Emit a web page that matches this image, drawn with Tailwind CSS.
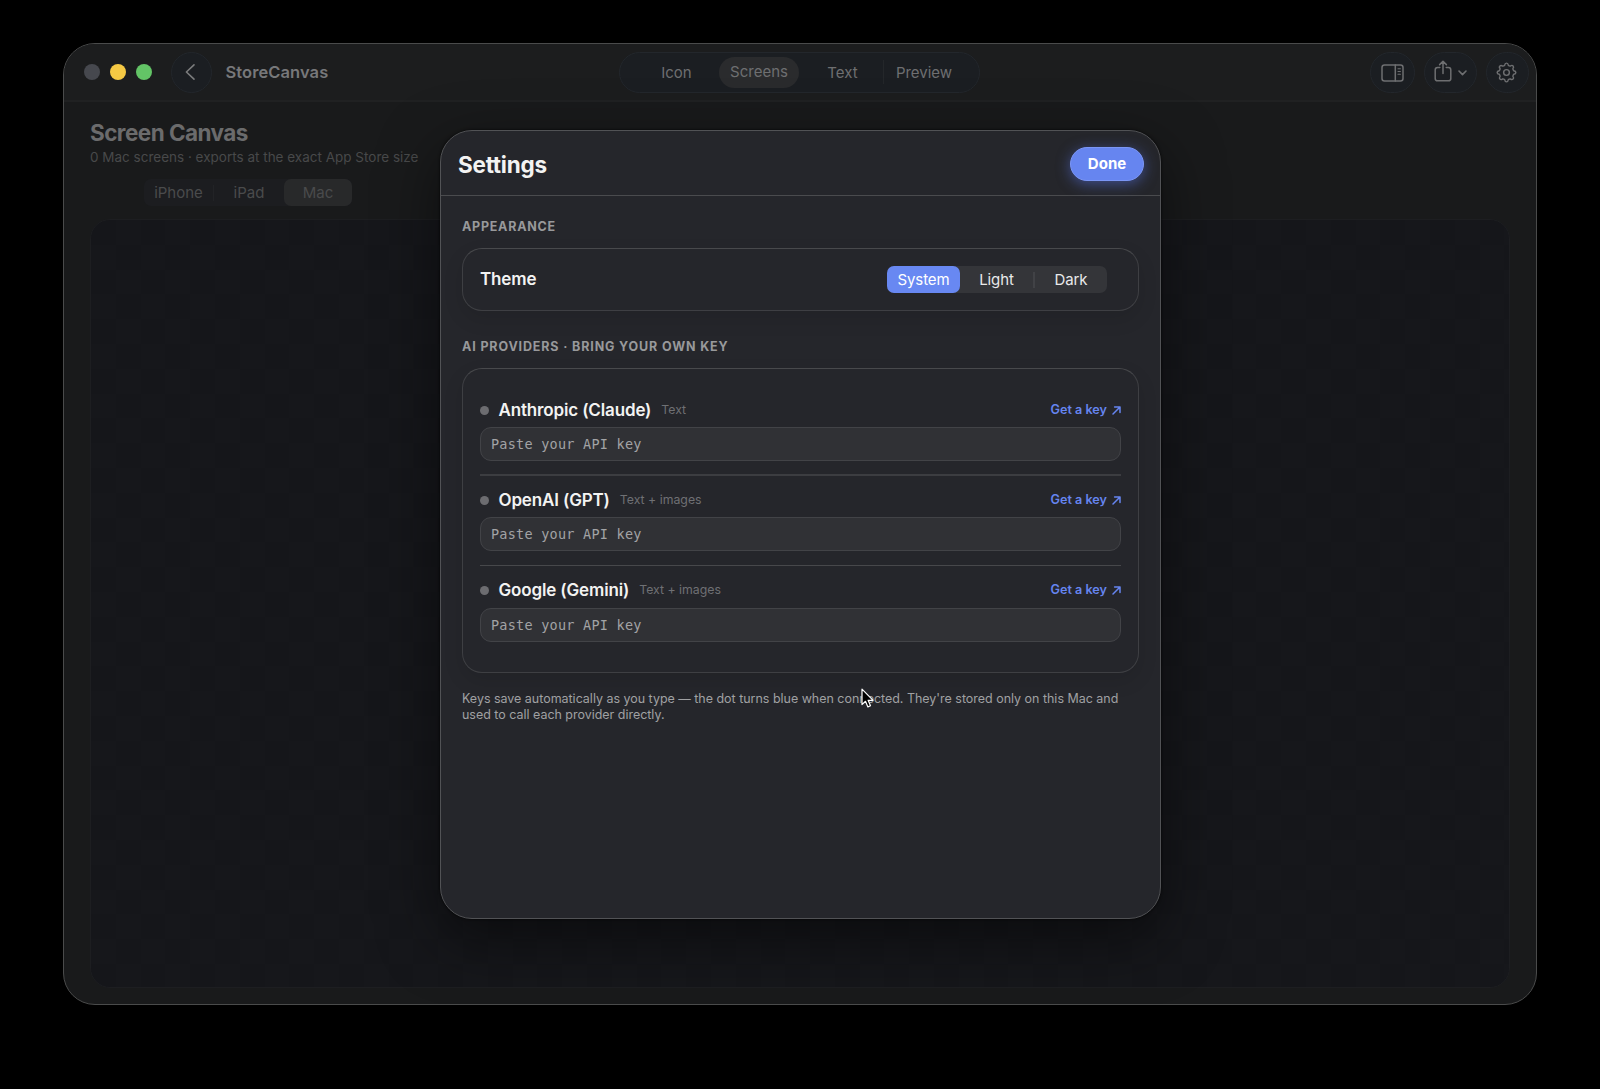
<!DOCTYPE html>
<html lang="en">
<head>
<meta charset="utf-8">
<title>StoreCanvas</title>
<script src="https://cdn.jsdelivr.net/npm/@tailwindcss/browser@4"></script>
</head>
<body class="h-screen overflow-hidden bg-black px-[63px] pt-[43px] font-['Inter',sans-serif] antialiased">
<div class="relative flex h-[962px] w-[1474px] flex-col overflow-hidden rounded-[32px] border border-[#4a4b4b] bg-[#191a1b]">
  <!-- Toolbar -->
  <header class="flex h-[58px] shrink-0 items-center border-b-2 border-[#202122] bg-[#1c1d1e] pl-5 pr-[7px]">
    <div class="flex gap-2.5">
      <span class="size-4 rounded-full bg-[#46484e]"></span>
      <span class="size-4 rounded-full bg-[#f5c944]"></span>
      <span class="size-4 rounded-full bg-[#63c466]"></span>
    </div>
    <div class="ml-[19px] flex size-[41px] items-center justify-center rounded-full border border-[#23272c] bg-[#1b1e22]">
      <svg class="-ml-1 size-[18px]" viewBox="0 0 18 18" fill="none" stroke="#7b7c7d" stroke-width="1.6" stroke-linecap="round" stroke-linejoin="round"><path d="M13 1.8 5.4 9l7.6 7.2"/></svg>
    </div>
    <h1 class="ml-[13.5px] w-[393.5px] text-[16.5px] font-semibold tracking-[0.08px] text-[#77787a]">StoreCanvas</h1>
    <nav class="flex h-[41px] w-[361px] items-center rounded-full border border-[#23272c] bg-[#1b1e22] text-[15px] text-[#6e6f71]">
      <span class="ml-[14px] w-[85px] pt-[2px] text-center">Icon</span>
      <span class="flex h-[31px] w-20 items-center justify-center rounded-full bg-[#2a2b2d] pt-px">Screens</span>
      <span class="w-[85px] border-r border-[#24272a] pl-[3px] pt-[2px] text-center">Text</span>
      <span class="w-20 pt-[2px] text-center">Preview</span>
    </nav>
    <div class="ml-auto flex gap-[9px]">
      <span class="flex h-[41px] w-[45px] items-center justify-center rounded-full border border-[#23272c] bg-[#1b1e22]">
        <svg class="mt-px h-[18px] w-[23px]" viewBox="0 0 23 18" fill="none" stroke="#6e6f71" stroke-width="1.5" stroke-linecap="round"><rect x="1" y="1" width="21" height="16" rx="2.5"/><path d="M14.3 1v16"/><path d="M17 4.8h2.4M17 7.5h2.4M17 10.2h2.4" stroke-width="1.1"/></svg>
      </span>
      <span class="flex h-[41px] w-[53px] items-center justify-center gap-[6px] rounded-full border border-[#23272c] bg-[#1b1e22]">
        <svg class="-mt-[2px] h-[22px] w-[18px]" viewBox="0 0 18 22" fill="none" stroke="#6e6f71" stroke-width="1.5" stroke-linecap="round" stroke-linejoin="round"><path d="M5.8 7.6H3.6A2.4 2.4 0 0 0 1.2 10v8.4a2.4 2.4 0 0 0 2.4 2.4h10.8a2.4 2.4 0 0 0 2.4-2.4V10a2.4 2.4 0 0 0-2.4-2.4h-2.2M9 13.6V1.4M5.6 4.6 9 1.2l3.4 3.4"/></svg>
        <svg class="mt-px h-[6px] w-[9px]" viewBox="0 0 9 6" fill="none" stroke="#6e6f71" stroke-width="1.6" stroke-linecap="round" stroke-linejoin="round"><path d="M1 1l3.5 3.6L8 1"/></svg>
      </span>
      <span class="flex h-[41px] w-[43px] items-center justify-center rounded-full border border-[#23272c] bg-[#1b1e22]">
        <svg class="-ml-[2px] size-[21px]" viewBox="0 0 22 22" fill="none" stroke="#6e6f71" stroke-width="1.5" stroke-linejoin="round"><circle cx="11" cy="11" r="3"/><path d="M9.1 3.4Q9.4 1.2 11 1.2T12.9 3.4Q13.6 4.2 15 4.3Q16.8 2.9 17.9 4.1T17.7 7Q17.7 8.2 18.6 9.1Q20.8 9.4 20.8 11T18.6 12.9Q17.7 13.8 17.7 15Q19.1 16.8 17.9 17.9T15 17.7Q13.6 17.8 12.9 18.6Q12.6 20.8 11 20.8T9.1 18.6Q8.4 17.8 7 17.7Q5.2 19.1 4.1 17.9T4.3 15Q4.3 13.8 3.4 12.9Q1.2 12.6 1.2 11T3.4 9.1Q4.3 8.2 4.3 7Q2.9 5.2 4.1 4.1T7 4.3Q8.4 4.2 9.1 3.4Z"/></svg>
      </span>
    </div>
  </header>

  <!-- Canvas page -->
  <main class="flex flex-1 flex-col px-[26px] pb-4 pt-[15px]">
    <h2 class="text-[22.5px] font-bold leading-8 tracking-[-0.55px] text-[#6b6b6c]">Screen Canvas</h2>
    <p class="-mt-px text-[13.5px] leading-[18px] text-[#48494a]">0 Mac screens · exports at the exact App Store size</p>
    <div class="ml-[54px] mt-[13px] flex h-[27px] w-[208px] items-center rounded-[7px] bg-[#1c1d20] text-[15px] text-[#4a4b4c]">
      <span class="w-[70px] border-r border-[#222326] text-center leading-4">iPhone</span>
      <span class="w-[70px] pt-px text-center">iPad</span>
      <span class="flex h-full w-[68px] items-center justify-center rounded-[7px] bg-[#28292a] pt-px">Mac</span>
    </div>
    <div class="mt-[13px] flex-1 rounded-[20px] border border-[#1d1e21] bg-[#15161a] bg-[repeating-conic-gradient(#16171b_0_25%,#15161a_0_50%)] bg-size-[49.6px_49.6px]"></div>
  </main>

  <!-- Settings sheet -->
  <section class="absolute left-[376px] top-[86px] flex h-[789px] w-[721px] flex-col rounded-[32px] border border-[#515255] bg-[#25262b] shadow-[0_20px_60px_rgba(0,0,0,0.5),0_0_3px_rgba(0,0,0,0.8)]">
    <header class="flex h-[65px] shrink-0 items-center justify-between border-b border-[#4a4b4e] pl-[17px] pr-4">
      <h2 class="mt-[3px] text-[22.5px] font-bold tracking-[-0.25px] text-[#f3f3f2]">Settings</h2>
      <button class="mt-[2px] h-[34px] w-[74px] rounded-full border border-[#7b96f5] bg-[#6685f0] pt-px text-[15px] font-bold text-white shadow-[0_3px_14px_rgba(90,120,240,0.5)]">Done</button>
    </header>
    <div class="flex flex-col px-[21px] pt-[23px]">
      <h3 class="text-[12.5px] font-bold leading-4 tracking-[0.75px] text-[#98999b]">APPEARANCE</h3>
      <div class="mt-[13px] flex h-[63px] items-center justify-between rounded-[20px] border border-[#3e3f43] border-t-[#48494c] pl-[17px] pr-[31px] shadow-[0_8px_20px_rgba(0,0,0,0.1)]">
        <span class="pt-px text-[17px] font-semibold tracking-[-0.15px] text-[#f3f3f2]">Theme</span>
        <div class="flex h-[27px] w-[220px] items-center rounded-[7px] bg-[#343539] text-[15px] tracking-[-0.1px] text-[#e9e9ea]">
          <span class="flex h-full w-[73px] items-center justify-center rounded-[7px] bg-[#6888f2] pt-px text-white">System</span>
          <span class="w-[75px] border-r-2 border-[#414246] text-center leading-4">Light</span>
          <span class="w-[72px] pt-px text-center">Dark</span>
        </div>
      </div>
      <h3 class="mt-[28px] text-[12.5px] font-bold leading-4 tracking-[0.86px] text-[#98999b]">AI PROVIDERS · BRING YOUR OWN KEY</h3>
      <div class="mt-[13px] flex h-[305px] flex-col rounded-[20px] border border-[#3e3f43] border-t-[#48494c] px-[17px] pt-[29px] shadow-[0_8px_20px_rgba(0,0,0,0.1)]">
        <div class="flex h-[76px] flex-col">
          <div class="flex h-[25px] items-center">
            <span class="size-[9px] rounded-full bg-[#6c6c70]"></span>
            <span class="ml-[9.5px] text-[17px] font-semibold tracking-[-0.15px] text-[#f3f3f2]">Anthropic (Claude)</span>
            <span class="ml-2.5 text-[12.3px] text-[#6f7074]">Text</span>
            <span class="ml-auto text-[12.6px] font-semibold text-[#6685f0]">Get a key</span>
            <svg class="ml-[5px] size-[9px]" viewBox="0 0 9 9" fill="none" stroke="#6685f0" stroke-width="1.5" stroke-linecap="round" stroke-linejoin="round"><path d="M1 8 8 1M2.6 1H8v5.4"/></svg>
          </div>
          <div class="mt-[4px] flex h-[34px] items-center rounded-[11px] border border-[#424347] bg-[#303135] px-2.5 font-['DejaVu_Sans_Mono',monospace] text-[13.5px] tracking-[0.24px] text-[#a2a3a5]">Paste your API key</div>
        </div>
        <div class="h-[90px] border-t-2 border-[#3c3d41] pt-[12px]">
          <div class="flex h-[25px] items-center">
            <span class="size-[9px] rounded-full bg-[#6c6c70]"></span>
            <span class="ml-[9.5px] text-[17px] font-semibold tracking-[-0.15px] text-[#f3f3f2]">OpenAI (GPT)</span>
            <span class="ml-2.5 text-[12.3px] text-[#6f7074]">Text + images</span>
            <span class="ml-auto text-[12.6px] font-semibold text-[#6685f0]">Get a key</span>
            <svg class="ml-[5px] size-[9px]" viewBox="0 0 9 9" fill="none" stroke="#6685f0" stroke-width="1.5" stroke-linecap="round" stroke-linejoin="round"><path d="M1 8 8 1M2.6 1H8v5.4"/></svg>
          </div>
          <div class="mt-[4px] flex h-[34px] items-center rounded-[11px] border border-[#424347] bg-[#303135] px-2.5 font-['DejaVu_Sans_Mono',monospace] text-[13.5px] tracking-[0.24px] text-[#a2a3a5]">Paste your API key</div>
        </div>
        <div class="mt-px border-t border-[#47484b] pt-[12px]">
          <div class="flex h-[25px] items-center">
            <span class="size-[9px] rounded-full bg-[#6c6c70]"></span>
            <span class="ml-[9.5px] text-[17px] font-semibold tracking-[-0.15px] text-[#f3f3f2]">Google (Gemini)</span>
            <span class="ml-2.5 text-[12.3px] text-[#6f7074]">Text + images</span>
            <span class="ml-auto text-[12.6px] font-semibold text-[#6685f0]">Get a key</span>
            <svg class="ml-[5px] size-[9px]" viewBox="0 0 9 9" fill="none" stroke="#6685f0" stroke-width="1.5" stroke-linecap="round" stroke-linejoin="round"><path d="M1 8 8 1M2.6 1H8v5.4"/></svg>
          </div>
          <div class="mt-[5px] flex h-[34px] items-center rounded-[11px] border border-[#424347] bg-[#303135] px-2.5 font-['DejaVu_Sans_Mono',monospace] text-[13.5px] tracking-[0.24px] text-[#a2a3a5]">Paste your API key</div>
        </div>
      </div>
      <p class="mt-[18px] whitespace-nowrap text-[12.46px] leading-4 text-[#a0a1a3]">Keys save automatically as you type — the dot turns blue when connected. They're stored only on this Mac and<br>used to call each provider directly.</p>
    </div>
  </section>

  <!-- Pointer -->
  <svg class="absolute left-[797px] top-[644px] h-[21px] w-[14px]" viewBox="0 0 14 21" fill="#000" stroke="#fff" stroke-width="1.2" stroke-linejoin="round"><path d="M1 1.2v15.4l3.5-3.3 2.4 5.6 2.6-1.1-2.4-5.5h5z"/></svg>
</div>
</body>
</html>
